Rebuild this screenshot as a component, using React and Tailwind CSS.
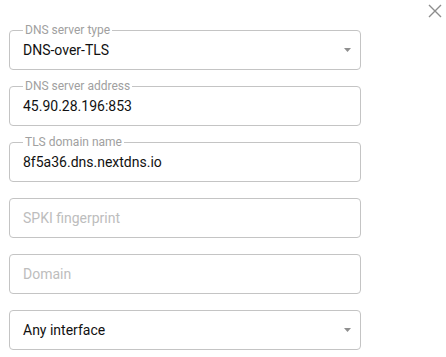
const Arrow = () => (
  <svg width="7" height="4" viewBox="0 0 7 4" className="absolute right-[9px] top-[17px]">
    <path d="M0 0h7L3.5 4z" fill="#8f8f8f" />
  </svg>
);

const Field = ({ label, value, placeholder, select }) => (
  <div className="relative flex h-[40px] w-[352px] items-center rounded-[4px] border border-[#c4c4c4] px-[13px]">
    {label && (
      <span className="absolute left-[13px] top-[-9px] bg-white px-[2px] text-[12px] leading-[16px] text-[#a0a0a0]">
        {label}
      </span>
    )}
    {value ? (
      <span className="text-[14px] text-[#111]">{value}</span>
    ) : (
      <span className="text-[14px] text-[#bdbdbd]">{placeholder}</span>
    )}
    {select && <Arrow />}
  </div>
);

export default function App() {
  return (
    <div className="relative h-[357px] w-[446px] bg-white font-['Roboto',sans-serif]">
      <svg width="14" height="14" viewBox="0 0 14 14" className="absolute left-[428px] top-[4px]">
        <path d="M1 1l12 12M13 1L1 13" stroke="#8d8d8d" strokeWidth="1.4" fill="none" />
      </svg>
      <div className="flex flex-col gap-[16px] pl-[9px] pt-[30px]">
        <Field label="DNS server type" value="DNS-over-TLS" select />
        <Field label="DNS server address" value="45.90.28.196:853" />
        <Field label="TLS domain name" value="8f5a36.dns.nextdns.io" />
        <Field placeholder="SPKI fingerprint" />
        <Field placeholder="Domain" />
        <Field value="Any interface" select />
      </div>
    </div>
  );
}
